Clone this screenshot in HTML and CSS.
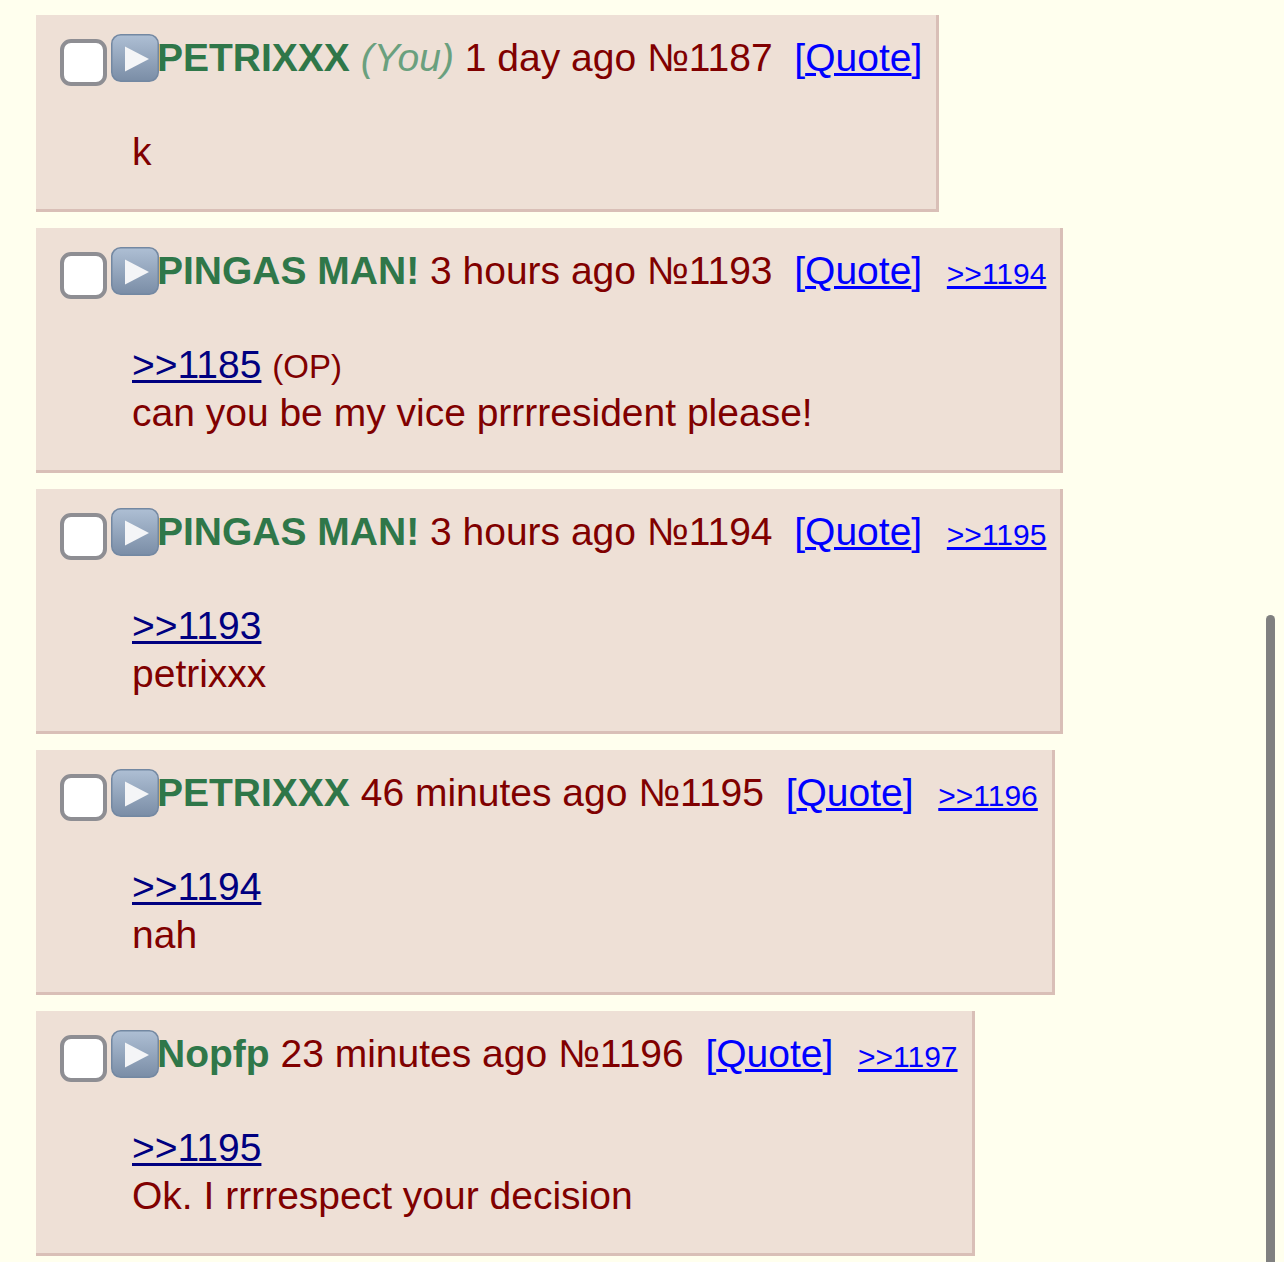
FILE: index.html
```html
<!DOCTYPE html>
<html lang="en">
<head>
<meta charset="utf-8">
<title>Thread</title>
<link rel="stylesheet" href="styles.css">
</head>
<body>
<div class="thread">

  <div class="post">
    <div class="post-info">
      <span class="cb"></span><svg class="play" viewBox="0 0 48 48" width="48" height="48"><defs><linearGradient id="g1" x1="0" y1="0" x2="0" y2="1"><stop offset="0" stop-color="#aebfd4"/><stop offset="1" stop-color="#7a8da6"/></linearGradient></defs><rect x="0.75" y="0.75" width="46.5" height="46.5" rx="9" fill="url(#g1)" stroke="#7388a2" stroke-width="1.5"/><path d="M14 12.5 L38 25 L14 37.5 Z" fill="#f4f5f7"/></svg><span class="name">PETRIXXX</span> <span class="you">(You)</span> <span class="date">1 day ago</span> <span class="no">№1187</span>&nbsp; <span class="qbr">[<a href="#" class="qlink">Quote</a>]</span>
    </div>
    <blockquote class="msg">k</blockquote>
  </div>

  <div class="post">
    <div class="post-info">
      <span class="cb"></span><svg class="play" viewBox="0 0 48 48" width="48" height="48"><defs><linearGradient id="g2" x1="0" y1="0" x2="0" y2="1"><stop offset="0" stop-color="#aebfd4"/><stop offset="1" stop-color="#7a8da6"/></linearGradient></defs><rect x="0.75" y="0.75" width="46.5" height="46.5" rx="9" fill="url(#g2)" stroke="#7388a2" stroke-width="1.5"/><path d="M14 12.5 L38 25 L14 37.5 Z" fill="#f4f5f7"/></svg><span class="name">PINGAS MAN!</span> <span class="date">3 hours ago</span> <span class="no">№1193</span>&nbsp; <span class="qbr">[<a href="#" class="qlink">Quote</a>]</span>&nbsp; <a href="#" class="backlink">&gt;&gt;1194</a>
    </div>
    <blockquote class="msg"><a href="#" class="quotelink">&gt;&gt;1185</a> <span class="op">(OP)</span><br>can you be my vice prrrresident please!</blockquote>
  </div>

  <div class="post">
    <div class="post-info">
      <span class="cb"></span><svg class="play" viewBox="0 0 48 48" width="48" height="48"><defs><linearGradient id="g3" x1="0" y1="0" x2="0" y2="1"><stop offset="0" stop-color="#aebfd4"/><stop offset="1" stop-color="#7a8da6"/></linearGradient></defs><rect x="0.75" y="0.75" width="46.5" height="46.5" rx="9" fill="url(#g3)" stroke="#7388a2" stroke-width="1.5"/><path d="M14 12.5 L38 25 L14 37.5 Z" fill="#f4f5f7"/></svg><span class="name">PINGAS MAN!</span> <span class="date">3 hours ago</span> <span class="no">№1194</span>&nbsp; <span class="qbr">[<a href="#" class="qlink">Quote</a>]</span>&nbsp; <a href="#" class="backlink">&gt;&gt;1195</a>
    </div>
    <blockquote class="msg"><a href="#" class="quotelink">&gt;&gt;1193</a><br>petrixxx</blockquote>
  </div>

  <div class="post">
    <div class="post-info">
      <span class="cb"></span><svg class="play" viewBox="0 0 48 48" width="48" height="48"><defs><linearGradient id="g4" x1="0" y1="0" x2="0" y2="1"><stop offset="0" stop-color="#aebfd4"/><stop offset="1" stop-color="#7a8da6"/></linearGradient></defs><rect x="0.75" y="0.75" width="46.5" height="46.5" rx="9" fill="url(#g4)" stroke="#7388a2" stroke-width="1.5"/><path d="M14 12.5 L38 25 L14 37.5 Z" fill="#f4f5f7"/></svg><span class="name">PETRIXXX</span> <span class="date">46 minutes ago</span> <span class="no">№1195</span>&nbsp; <span class="qbr">[<a href="#" class="qlink">Quote</a>]</span>&nbsp; <a href="#" class="backlink">&gt;&gt;1196</a>
    </div>
    <blockquote class="msg"><a href="#" class="quotelink">&gt;&gt;1194</a><br>nah</blockquote>
  </div>

  <div class="post">
    <div class="post-info">
      <span class="cb"></span><svg class="play" viewBox="0 0 48 48" width="48" height="48"><defs><linearGradient id="g5" x1="0" y1="0" x2="0" y2="1"><stop offset="0" stop-color="#aebfd4"/><stop offset="1" stop-color="#7a8da6"/></linearGradient></defs><rect x="0.75" y="0.75" width="46.5" height="46.5" rx="9" fill="url(#g5)" stroke="#7388a2" stroke-width="1.5"/><path d="M14 12.5 L38 25 L14 37.5 Z" fill="#f4f5f7"/></svg><span class="name">Nopfp</span> <span class="date">23 minutes ago</span> <span class="no">№1196</span>&nbsp; <span class="qbr">[<a href="#" class="qlink">Quote</a>]</span>&nbsp; <a href="#" class="backlink">&gt;&gt;1197</a>
    </div>
    <blockquote class="msg"><a href="#" class="quotelink">&gt;&gt;1195</a><br>Ok. I rrrrespect your decision</blockquote>
  </div>

</div>
<div class="scroll-indicator"></div>
</body>
</html>
```

FILE: styles.css
```css
html {
  overflow: hidden;
  background: #ffffee;
}

body {
  margin: 0;
  padding: 15px 0 0 36px;
  background: #ffffee;
  font-family: "Liberation Sans", Arial, Helvetica, sans-serif;
  font-size: 39px;
  color: #800000;
}

.thread {
  display: flex;
  flex-direction: column;
  align-items: flex-start;
  gap: 16.5px;
}

.post {
  width: fit-content;
  background: #eee0d6;
  border-right: 3px solid #d9bfb7;
  border-bottom: 3px solid #d9bfb7;
  padding: 18.5px 14px 33px 24px;
}

.post-info {
  white-space: nowrap;
  line-height: 48px;
  height: 48px;
}

.cb {
  display: inline-block;
  vertical-align: top;
  box-sizing: border-box;
  width: 47px;
  height: 47px;
  margin-top: 5px;
  margin-bottom: -4px;
  border: 4px solid #8e8e93;
  border-radius: 11px;
  background: #ffffff;
}

.play {
  display: inline-block;
  vertical-align: top;
  margin-left: 4px;
  margin-right: -2px;
}

.name {
  color: #2f7749;
  font-weight: bold;
}

.you {
  color: #6aa07e;
  font-style: italic;
}

.date,
.no {
  color: #800000;
}

.qbr {
  color: #0000ff;
}

.qlink {
  color: #0000ff;
  text-decoration: underline;
}

.backlink {
  color: #0000ff;
  font-size: 30px;
  margin-left: 3px;
  text-decoration: underline;
}

.msg {
  margin: 46px 0 0 72px;
  line-height: 48px;
  white-space: nowrap;
}

.quotelink {
  color: #000080;
  text-decoration: underline;
}

.op {
  font-size: 33px;
  line-height: 1;
}

.scroll-indicator {
  position: fixed;
  left: 1266px;
  top: 615px;
  width: 9px;
  height: 700px;
  border-radius: 4.5px;
  background: #808080;
}
```
